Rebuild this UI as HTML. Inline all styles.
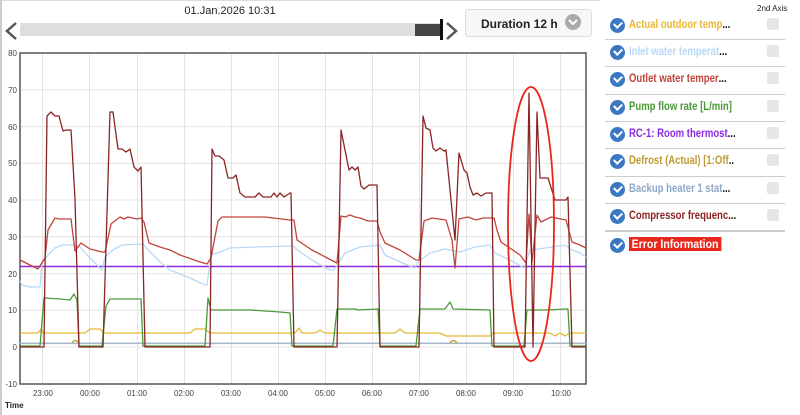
<!DOCTYPE html>
<html><head><meta charset="utf-8"><style>
body{margin:0;width:800px;height:415px;background:#fff;font-family:"Liberation Sans",sans-serif;overflow:hidden;position:relative}
.lg{position:absolute;left:608px;width:178px;height:27px}
.lg .ck{position:absolute;left:2px;top:6px;width:15px;height:15px;border-radius:50%;background:#3b78c2}
.lg .ck:after{content:"";position:absolute;left:4px;top:3px;width:6px;height:4px;border-left:2px solid #fff;border-bottom:2px solid #fff;transform:rotate(-45deg)}
.lg .t{position:absolute;left:21px;top:7px;font-size:11.5px;font-weight:bold;white-space:nowrap;transform:scaleX(0.83);transform-origin:0 0}
.lg .t b{color:#111}
.lg .bx{position:absolute;left:159px;top:6px;width:12px;height:12px;background:#e6e6e6;border-radius:2px}
.sep{position:absolute;left:605px;width:180px;height:1px;background:#ccc}
</style></head><body>
<div style="position:absolute;left:0;top:0;width:2px;height:415px;background:#ccc"></div>
<div style="position:absolute;left:2px;top:0;width:598px;height:1px;background:#ddd"></div>
<div style="position:absolute;left:0;top:5px;width:460px;text-align:center;font-size:11px;color:#222">01.Jan.2026 10:31</div>
<svg style="position:absolute;left:0;top:0" width="600" height="45">
<polyline points="16,23 7,31 16,39" fill="none" stroke="#555" stroke-width="2.5"/>
<rect x="20" y="23" width="420" height="13" fill="#dedede"/>
<rect x="415" y="24" width="25" height="12" fill="#444"/>
<rect x="440" y="19" width="3" height="21" fill="#111"/>
<polyline points="447,23 456,31 447,39" fill="none" stroke="#555" stroke-width="2.5"/>
<rect x="465.5" y="9.5" width="126" height="27" rx="3" fill="#f7f7f7" stroke="#ddd"/>
<text x="481" y="28" font-size="12" font-weight="bold" fill="#222" font-family="Liberation Sans">Duration 12 h</text>
<circle cx="573" cy="22" r="8" fill="#aaa"/>
<polyline points="569,20 573,24 577,20" fill="none" stroke="#fff" stroke-width="2"/>
</svg>
<svg style="position:absolute;left:0;top:45" width="600" height="370" viewBox="0 45 600 370" font-family="Liberation Sans">
<g stroke="#e4e4e4" stroke-width="1">
<line x1="20" y1="89.8" x2="586" y2="89.8"/><line x1="20" y1="126.6" x2="586" y2="126.6"/><line x1="20" y1="163.3" x2="586" y2="163.3"/><line x1="20" y1="200" x2="586" y2="200"/><line x1="20" y1="236.8" x2="586" y2="236.8"/><line x1="20" y1="273.6" x2="586" y2="273.6"/><line x1="20" y1="310.3" x2="586" y2="310.3"/><line x1="20" y1="347" x2="586" y2="347"/>
<line x1="42.5" y1="53" x2="42.5" y2="384"/><line x1="89.5" y1="53" x2="89.5" y2="384"/><line x1="137.5" y1="53" x2="137.5" y2="384"/><line x1="184.5" y1="53" x2="184.5" y2="384"/><line x1="231.5" y1="53" x2="231.5" y2="384"/><line x1="278.5" y1="53" x2="278.5" y2="384"/><line x1="325.5" y1="53" x2="325.5" y2="384"/><line x1="372.5" y1="53" x2="372.5" y2="384"/><line x1="419.5" y1="53" x2="419.5" y2="384"/><line x1="466.5" y1="53" x2="466.5" y2="384"/><line x1="513.5" y1="53" x2="513.5" y2="384"/><line x1="560.5" y1="53" x2="560.5" y2="384"/>
</g>
<rect x="20" y="53" width="566" height="331" fill="none" stroke="#555" stroke-width="1.5"/>
<g font-size="8" fill="#444" text-anchor="end">
<text x="17" y="56">80</text><text x="17" y="93">70</text><text x="17" y="130">60</text><text x="17" y="166">50</text><text x="17" y="203">40</text><text x="17" y="240">30</text><text x="17" y="277">20</text><text x="17" y="313">10</text><text x="17" y="350">0</text><text x="17" y="387">-10</text>
</g>
<g font-size="8" fill="#444" text-anchor="middle">
<text x="43" y="396">23:00</text><text x="90" y="396">00:00</text><text x="137" y="396">01:00</text><text x="184" y="396">02:00</text><text x="231" y="396">03:00</text><text x="278" y="396">04:00</text><text x="325" y="396">05:00</text><text x="372" y="396">06:00</text><text x="419" y="396">07:00</text><text x="466" y="396">08:00</text><text x="513" y="396">09:00</text><text x="561" y="396">10:00</text>
</g>
<text x="5" y="408" font-size="8" font-weight="bold" fill="#222">Time</text>
<g fill="none" stroke-width="1.3" stroke-linejoin="round">
<line x1="20" y1="343.3" x2="586" y2="343.3" stroke="#a8b8cc" stroke-width="1.6"/>
<polyline stroke="#e8b830" points="20,333 38,333 41,329 43,333 85,333 90,329 100,329 104,333 190,333 195,329 205,329 210,333 295,333 299,328 302,333 315,333 320,330 325,333 335,333 395,333 400,329 405,333 440,333 446,336 490,336 493,333 550,333 555,336 560,333 565,336 570,333 586,333"/>
<path d="M72,343 Q75,338 79,343 M450,343 Q453,338 457,343" stroke="#c09a30"/>
<line x1="20" y1="266.5" x2="586" y2="266.5" stroke="#8a2be2" stroke-width="1.5"/>
<polyline stroke="#4a9a3a" points="20,346 40,346 44,298 60,299 70,300 74,294 77,300 79,346 102,346 106,306 110,299 128,299 141,299 143,346 205,346 208,298 211,310 250,310 280,312 290,313 292,346 333,346 337,309 355,309 358,310 378,309 380,346 416,346 420,309 445,309 450,302 453,309 490,310 492,346 524,346 527,310 545,310 568,309 570,346 586,346"/>
<polyline stroke="#b8d8f6" points="20,281 22,285 30,287 40,287 42,262 48,255 55,248 63,245 72,245 80,247 90,258 100,268 102,270 105,257 113,250 122,245 143,244 150,252 160,262 170,270 190,278 205,285 207,285 211,255 220,252 230,248 255,247 293,246 300,252 315,262 330,270 334,270 345,253 360,247 380,245 385,255 400,262 415,268 418,262 430,253 445,249 460,252 475,247 490,245 495,253 510,260 524,268 530,250 545,248 565,245 572,250 580,253 586,257"/>
<polyline stroke="#c0443c" points="20,260 38,269 45,258 48,230 55,218 59,219 71,219 75,251 81,243 90,249 102,252 105,252 111,224 120,217 124,219 128,217 137,219 141,218 144,222 149,243 160,247 170,250 180,255 200,262 207,264 211,258 218,221 222,217 265,217 290,220 294,220 297,240 312,250 333,261 337,263 341,216 345,217 350,215 355,217 360,218 368,221 377,221 380,232 385,243 400,250 416,260 419,260 424,221 432,218 446,220 452,240 455,268 459,219 468,217 476,220 483,218 494,218 497,230 501,242 520,255 526,263 529,214 532,262 537,215 541,222 551,217 566,220 572,242 580,245 586,248"/>
<polyline stroke="#8b2525" points="20,347 44,347 47,116 51,112 55,116 59,116 63,131 66,130 71,130 75,199 79,347 103,347 110,112 113,112 118,149 122,149 126,152 130,149 134,167 138,171 141,167 145,347 210,347 212,149 215,156 219,156 224,160 228,178 233,178 236,175 240,193 245,197 255,197 259,193 263,197 271,197 274,193 277,197 280,193 284,197 290,193 291,193 294,347 337,347 341,130 345,150 349,170 352,167 355,170 358,167 361,186 364,189 369,185 377,185 380,347 419,347 423,116 426,128 430,130 433,148 436,151 440,148 444,151 446,150 455,240 459,153 464,170 467,173 470,187 473,195 477,193 481,196 486,193 492,193 494,347 525,347 529,93 533,347 537,112 540,178 548,178 555,200 566,200 568,197 572,347 586,347"/>
<ellipse cx="531" cy="224" rx="23" ry="137" stroke="#e8281e" stroke-width="1.8"/>
</g>
</svg>
<div style="position:absolute;left:757px;top:4px;font-size:8px;color:#222">2nd Axis</div>
<div class="lg" style="top:12px"><div class="ck"></div><div class="t" style="color:#e8b830">Actual outdoor temp<b>...</b></div><div class="bx"></div></div>
<div class="sep" style="top:39px"></div>
<div class="lg" style="top:39px"><div class="ck"></div><div class="t" style="color:#b8d8f6">Inlet water temperat<b>...</b></div><div class="bx"></div></div>
<div class="sep" style="top:66px"></div>
<div class="lg" style="top:66px"><div class="ck"></div><div class="t" style="color:#c0443c">Outlet water temper<b>...</b></div><div class="bx"></div></div>
<div class="sep" style="top:94px"></div>
<div class="lg" style="top:94px"><div class="ck"></div><div class="t" style="color:#4a9a3a">Pump flow rate [L/min]</div><div class="bx"></div></div>
<div class="sep" style="top:121px"></div>
<div class="lg" style="top:121px"><div class="ck"></div><div class="t" style="color:#8a2be2">RC-1: Room thermost<b>...</b></div><div class="bx"></div></div>
<div class="sep" style="top:148px"></div>
<div class="lg" style="top:148px"><div class="ck"></div><div class="t" style="color:#c09a30">Defrost (Actual) [1:Off<b>..</b></div><div class="bx"></div></div>
<div class="sep" style="top:176px"></div>
<div class="lg" style="top:176px"><div class="ck"></div><div class="t" style="color:#8fa8c8">Backup heater 1 stat<b>...</b></div><div class="bx"></div></div>
<div class="sep" style="top:203px"></div>
<div class="lg" style="top:203px"><div class="ck"></div><div class="t" style="color:#8b2525">Compressor frequenc<b>...</b></div><div class="bx"></div></div>
<div class="sep" style="top:230px;height:2px"></div>
<div class="lg" style="top:232px"><div class="ck"></div><div class="t" style="top:5px;color:#fff;background:#e8281e;padding:0 3px;font-size:12px;transform:scaleX(0.88)">Error Information</div></div>
</body></html>
